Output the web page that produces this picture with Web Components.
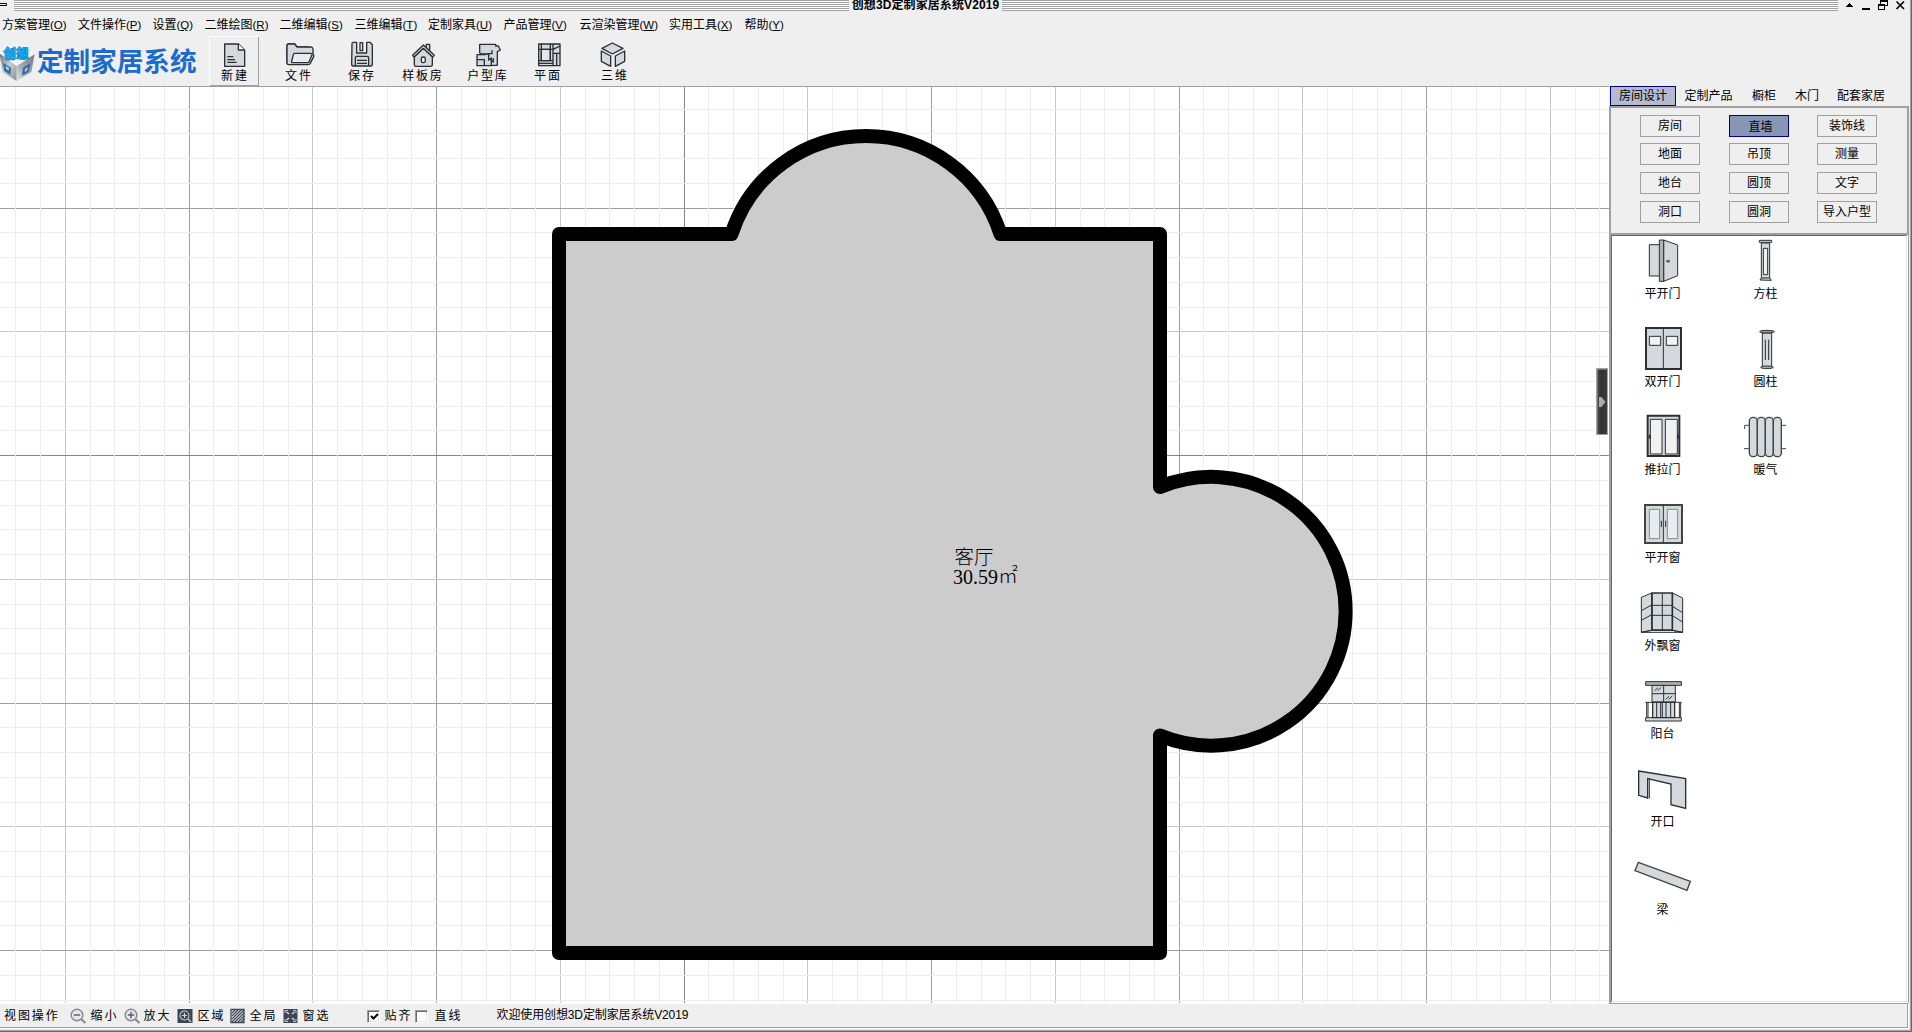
<!DOCTYPE html>
<html lang="zh-CN">
<head>
<meta charset="utf-8">
<title>创想3D定制家居系统V2019</title>
<style>
html,body{margin:0;height:100%;overflow:hidden;background:#efefef}
body{font:12px/16px "Liberation Sans","Noto Sans CJK SC",sans-serif;color:#000}
</style>
</head>
<body>
<design-app></design-app>
<script>
const define = (name, html, setup) => {
  const t = document.createElement('template');
  t.innerHTML = html;
  customElements.define(name, class extends HTMLElement {
    constructor() {
      super();
      this.attachShadow({mode: 'open'});
    }
    connectedCallback() {
      if (this.shadowRoot.childNodes.length) return;
      this.shadowRoot.append(t.content.cloneNode(true));
      if (setup) setup(this, this.shadowRoot);
    }
  });
};
const F = '#d3d9dd', K = '#2b2f33';
const toolIcons = {
  neu: ['627', `<path d="M674 132h41l19 18v49h-60z"/><path d="M715 132v18h19" fill="#fff"/><path d="M682 170h18M682 179h23M682 187h28" fill="none"/>`],
  open: ['819', `<path d="M866 194q-5-1-5-6v-50q0-6 5-6h18l7 9h33q5 0 6 6v8"/><path d="M866 194q-5-1-5-6v-50q0-6 5-6h18l7 9h42q5 0 6 6v16q4 2 2 7l-9 18q-2 6-9 6z"/><path d="M883 160h48q6 0 5 4l-8 20q-2 4-6 4h-43q-6 0-4-5l5-19q1-4 3-4z" fill="#e9ecee"/>`],
  save: ['1008', `<path d="M1056 131q0-4 4-4h10v32h30v-32h10l7 7v58q0 6-5 6h-52q-5 0-5-6z"/><path d="M1080 128h8v24h-8z" fill="#e7e7e7"/><path d="M1066 198v-25q0-4 4-4h32q4 0 4 4v25M1071 181h30M1071 190h30" fill="none"/>`],
  house: ['-9', `<path d="M43 170v24q0 5 5 5h44q5 0 5-5v-24l-27-26z"/><path d="M79 146v-13h10v24"/><path d="M38 166l32-31 33 31-5 5-28-26-28 26z"/><rect x="64" y="171" width="12" height="17" rx="5" fill="#efefef"/>`],
  unit: ['186', `<path d="M231 164h24v-3h20v36h-44z"/><path d="M239 133h48v5h8l6 12-9 5v41h-18v-22l-8 6v-18h-20l-7-3z"/><path d="M231 179h22v18M270 178l10 8v-12M262 161h14v-10" fill="none"/>`],
  plan: ['366', `<path d="M416 132h64v65h-64z"/><path d="M424 148h27v34h-27z" fill="#e3e7ea"/><path d="M424 132v50M416 148h43M459 132v65M416 190h43M451 132v50M459 160h21M459 148l21-10M416 182h43M470 160v37" fill="none"/>`],
  cube: ['567', `<path d="M606 145l31-16 32 16-32 17z"/><path d="M604 153l28 15v31l-28-15z"/><path d="M674 153l-28 15v31l28-15z"/>`]
};
const itemIcons = {
  door: ['120 39', `<path d="M178 59h34v94h-34z"/><path d="M221 45l42 15v92l-42 17z"/><path d="M208 45h13v124h-13z" fill="#aeb5ba"/><path d="M229 109h10" stroke-width="4"/><circle cx="235" cy="109" r="3"/>`],
  pillar: ['429 39', `<path d="M514 54h25v106h-25z"/><path d="M520 70h13v79h-13z" fill="#f1f1f1"/><path d="M508 46h37v6h-37zM510 165q2-7 8-6h18q6 0 8 7z"/>`],
  doubledoor: ['120 303', `<path d="M168 309h105v123h-105z" stroke-width="6"/><path d="M220 309v123"/><path d="M178 334h34v27h-34zM229 334h34v27h-34z" fill="#f1f1f1"/>`],
  column: ['429 303', `<path d="M517 324h28v102h-28z"/><path d="M526 344v61M536 344v61" fill="none"/><ellipse cx="531" cy="320" rx="22" ry="4" fill="#999"/><ellipse cx="531" cy="427" rx="19" ry="4" fill="#aaa"/>`],
  slide: ['120 567', `<path d="M173 572h95v121h-95z" stroke-width="6"/><path d="M181 583h35v104h-35zM226 583h36v104h-36z" fill="#f1f1f1"/><path d="M179 629v12M264 629v12" stroke-width="5"/>`],
  heater: ['429 567', `<path d="M464 612v-11h14M462 671h16M574 601h14M574 671h14" fill="none" stroke="#444"/><g stroke="#444" stroke-width="4"><rect x="478" y="577" width="24" height="118" rx="11"/><rect x="502" y="577" width="24" height="118" rx="11"/><rect x="526" y="577" width="24" height="118" rx="11"/><rect x="550" y="577" width="24" height="118" rx="11"/></g>`],
  window: ['120 831', `<path d="M165 840h111v114h-111z" stroke-width="6" stroke="#444"/><path d="M220 840v114"/><path d="M178 853h31v88h-31zM232 853h31v88h-31z" fill="#e6edf0" stroke="#888"/><path d="M214 887v19M227 887v19"/>`],
  bay: ['120 60', `<path d="M154 82l31-13v112l-31 6zM278 84l-31-15v112l31 6z"/><path d="M186 69h61v111h-61z" stroke-width="5"/><path d="M217 69v111M186 106h61M186 136h61M154 122l31-17M154 151l31-17M247 109l31 19M247 137l31 19M154 187l31-6h62l31 6z" fill="none"/>`],
  balcony: ['120 324', `<path d="M186 346h70v50h-70z"/><path d="M221 346v50M186 371h70M194 362l10-9M203 362l11-10M227 388l10-9M236 388l11-10" fill="none"/><path d="M167 335h107v11h-107z" fill="#aab0b5"/><path d="M188 397h66v46h-66zM167 443h107v10h-107z"/><path d="M166 397h109M170 397v46M174 397v46M188 397v46M200 397v46M212 397v46M217 397v46M228 397v46M242 397v46M254 397v46M268 397v46M272 397v46" fill="none"/>`],
  opening: ['120 588', `<path d="M146 603l141 23v89l-44-11v-62l-70-16v58l-27-8z" stroke-width="4"/><path d="M178 627v58" fill="none"/>`],
  beam: ['120 852', `<path d="M145 877l156 57-10 27-156-59z" stroke-width="4" stroke="#444"/>`]
};
const small = {
  minus: `<circle cx="7" cy="7" r="5.8" fill="#e4e8ec" stroke="#858a92" stroke-width="1.4"/><path d="M3.8 7h6.4" stroke="#555b65" stroke-width="1.4"/><path d="M11 11l4.5 4" stroke="#858a92" stroke-width="2.2"/>`,
  plus: `<circle cx="7" cy="7" r="5.8" fill="#e4e8ec" stroke="#858a92" stroke-width="1.4"/><path d="M3.8 7h6.4M7 3.8v6.4" stroke="#555b65" stroke-width="1.4"/><path d="M11 11l4.5 4" stroke="#858a92" stroke-width="2.2"/>`,
  area: `<path d="M.5 1h15v14h-15z" fill="#3d4653"/><circle cx="7.5" cy="7.5" r="4.5" fill="none" stroke="#c5cad0" stroke-width="1.1"/><path d="M5 7.5h5M7.5 5v5M11 11l3 3" stroke="#d5d9dd" stroke-width="1.1"/>`,
  all: `<path d="M1 1.500h13v13h-13z" fill="#f4f4f4" stroke="#3d4653" stroke-width="1.3"/><path d="M2 5l3-3M2 8l6-6M2 11l9-9M2 14l12-12M5 14l9-9M8 14l6-6M11 14l3-3" stroke="#3d4653" stroke-width="1.3"/>`,
  pick: `<path d="M.5 1h14v14h-14z" fill="#3d4653"/><path d="M2 5V2.500h3M10 2.500h3V5M13 11v2.500h-3M5 13.500H2V11" fill="none" stroke="#b9c0c7"/><path d="M3.500 4l2.500 2M11.500 4L9 6M3.500 12l2.500-2M11.500 12L9 10" stroke="#dfe3e6" stroke-width="1.300"/>`
};

define('title-bar', `<style>
:host{display:flex;height:16px;box-sizing:border-box}
.rail{flex:none;height:11px;background:repeating-linear-gradient(#a0a0a0 0 1px,#fff 1px 2px)}
b{flex:none;width:153px;height:11px;line-height:10px;letter-spacing:.1px;overflow:hidden;display:flex;justify-content:center;white-space:nowrap}
svg{display:block;flex:none}
</style>
<svg width="14" height="11"><path d="M0 3.500h6.500v2H0" fill="none" stroke="#000"/></svg>
<div class="rail" style="width:835px"></div><b><slot></slot></b><div class="rail" style="width:836px"></div>
<svg width="70" height="14" shape-rendering="crispEdges" fill="none" stroke="#000" stroke-width="1"><path d="M7 7l4-4 4 4z" fill="#000" stroke="none"/><path d="M24 9h8" stroke-width="2"/><path d="M43 1h7" stroke-width="2"/><path d="M42.500 0v4M49.500 0v5.500H46"/><path d="M40.500 5v4.500h6V5z"/><path d="M40 5h7" stroke-width="2"/><path d="M58.500 1.500l7.500 7.500M66 1.500l-7.500 7.500" stroke-width="1.600" shape-rendering="auto"/></svg>`);

define('menu-bar', `<style>
:host{display:flex;height:20px;padding-left:2px}
span{white-space:nowrap;line-height:19px;flex:none}
i{font-style:normal;font-size:11.500px}
</style>`, (h, r) => {
  [['方案管理','O',76],['文件操作','P',74.500],['设置','Q',52],['二维绘图','R',75],['二维编辑','S',75],['三维编辑','T',73.500],['定制家具','U',75.500],['产品管理','V',76],['云渲染管理','W',89.500],['实用工具','X',75.500],['帮助','Y',60]]
  .forEach(([t,k,w]) => {
    const s = document.createElement('span');
    s.style.width = w + 'px';
    s.innerHTML = `${t}<i>(<u>${k}</u>)</i>`;
    r.append(s);
  });
});

define('app-logo', `<style>
:host{display:flex;width:209px;height:50px;align-items:center}
b{font:bold 26.600px/30px "Noto Sans CJK SC",sans-serif;color:#1a6bcb;margin:-2px 0 0 1px;white-space:nowrap}
svg{display:block;flex:none}
</style>
<svg width="36" height="50" viewBox="0 108 108 150">
<defs><linearGradient id="l" x1="0" y1="0" x2="1" y2="1"><stop offset="0" stop-color="#6f7377"/><stop offset=".5" stop-color="#c9ccce"/><stop offset="1" stop-color="#8b8f93"/></linearGradient><linearGradient id="r" x1="1" y1="0" x2="0" y2="1"><stop offset="0" stop-color="#75797d"/><stop offset=".6" stop-color="#a5a9ad"/><stop offset="1" stop-color="#e3e5e7"/></linearGradient></defs>
<path d="M0 158l50-34 54 37-54 36z" fill="#f3f3f3"/><path d="M-2 160l52 37v46L9 218z" fill="url(#l)"/><path d="M104 161l-54 36v46l44-27z" fill="url(#r)"/>
<path d="M9 188l24 15-2 22-18-12z" fill="#2a6db0"/><path d="M17 197l10 6-1 9-8-5z" fill="#b9c9d8"/><path d="M92 189l-23 14-3 24 20-12z" fill="#2a6db0"/><path d="M84 201l-9 6-1 9 7-4z" fill="#b9c9d8"/>
<path d="M0 158l50 39 54-36" fill="none" stroke="#fff" stroke-width="2"/>
<text x="10" y="175" font-family="Noto Sans CJK SC" font-weight="900" font-size="38" fill="#12b8f3" stroke="#0d8fd8" stroke-width="2.500">创想</text></svg>
<b>定制家居系统</b>`);

define('tool-button', `<style>
:host{display:flex;flex-direction:column;align-items:center;width:50px;height:50px;box-sizing:border-box;flex:none}
:host([active]){background:linear-gradient(#fff,#fff) 0 0/100% 1px no-repeat,linear-gradient(#fff,#fff) 0 0/1px 100% no-repeat,linear-gradient(#a0a0a0,#a0a0a0) 100% 0/1px 100% no-repeat,linear-gradient(#a0a0a0,#a0a0a0) 0 100%/100% 1px no-repeat}
svg{display:block;margin-top:4px;flex:none}
span{line-height:17px;letter-spacing:1.800px;margin-right:-1.800px;white-space:nowrap}
</style><svg width="50" height="28"></svg><span><slot></slot></span>`, (h, r) => {
  const [x, p] = toolIcons[h.getAttribute('icon')], s = r.querySelector('svg');
  s.setAttribute('viewBox', `${x} 120 150 84`);
  s.innerHTML = `<g fill="${F}" stroke="${K}" stroke-width="4" stroke-linejoin="round">${p}</g>`;
});

define('tool-bar', `<style>:host{display:flex;height:50px;border-bottom:1px solid #a0a0a0;width:1609px}</style>
<app-logo></app-logo>
<tool-button icon="neu" active>新建</tool-button>
<tool-button icon="open" style="margin-left:14px">文件</tool-button>
<tool-button icon="save" style="margin-left:13px">保存</tool-button>
<tool-button icon="house" style="margin-left:11px">样板房</tool-button>
<tool-button icon="unit" style="margin-left:15px">户型库</tool-button>
<tool-button icon="plan" style="margin-left:10px">平面</tool-button>
<tool-button icon="cube" style="margin-left:17px">三维</tool-button>`);

define('plan-canvas', `<style>
:host{display:block;position:relative;width:1609px;height:917px;background:#fff;overflow:hidden}
svg{display:block}
.handle{position:absolute;left:1596px;top:281px}
</style>
<svg width="1609" height="917" viewBox="0 87 1609 917"><g id="grid" shape-rendering="crispEdges"></g>
<path d="M559 234H731.500A141.300 141.300 0 0 1 1000.500 234H1160V487A134.400 134.400 0 1 1 1160 735.500V953H559Z" fill="#ccc" stroke="#000" stroke-width="14" stroke-linejoin="round"/>
<text x="954.500" y="564" font-family="Noto Sans CJK SC" font-weight="300" font-size="19.500">客厅</text>
<text x="953" y="583.500" font-family="Liberation Serif" font-size="20">30.59</text><text x="998" y="583" font-family="Noto Sans CJK SC" font-weight="300" font-size="20">㎡</text></svg>
<svg class="handle" width="12" height="67"><defs><linearGradient id="h"><stop offset="0" stop-color="#4a4a4a"/><stop offset=".4" stop-color="#303030"/><stop offset="1" stop-color="#3c3c3c"/></linearGradient></defs><path d="M0 0h12v67H0z" fill="#a0a0a0"/><path d="M1.500 1.500h9.500V66H1.500z" fill="url(#h)"/><path d="M3 29h2.500l4 5-4 5H3z" fill="#aaa"/></svg>`,
(h, r) => {
  const g = r.getElementById('grid'), minor = [], major = [];
  const color = k => k === 0 ? '#858585' : k % 10 === 0 ? '#a0a0a0' : '#c8c8c8';
  for (let k = -27; k <= 37; k++) {
    const x = Math.floor(684 + 24.75 * k);
    (k % 5 ? minor : major).push(`<path d="M${x} 87h1v916h-1z" fill="${k % 5 ? '#ededed' : color(k)}"/>`);
  }
  for (let k = -14; k <= 22; k++) {
    const y = Math.floor(455.5 + 24.75 * k);
    (k % 5 ? minor : major).push(`<path d="M0 ${y}h1609v1H0z" fill="${k % 5 ? '#ededed' : color(k)}"/>`);
  }
  g.innerHTML = major.join('') + minor.join('');
});

define('panel-tabs', `<style>
:host{display:flex;height:20px;margin-left:1px}
span{box-sizing:border-box;height:20px;line-height:21px;text-align:center;white-space:nowrap}
.on{width:66px;border:1px solid #000080;background:#b5bad1;line-height:19px}
</style><span class="on">房间设计</span><span style="width:65px">定制产品</span><span style="width:46px">橱柜</span><span style="width:40px">木门</span><span style="width:68px">配套家居</span>`);

define('wall-button', `<style>
:host{display:block;box-sizing:border-box;width:60px;height:22px;border:1px solid #a0a0a0;line-height:20px;text-align:center;white-space:nowrap}
:host([active]){border-color:#000080;background:#8795b7;padding:1px 0 0 3px}
</style><slot></slot>`);

define('build-tools', `<style>
:host{display:grid;box-sizing:border-box;width:300px;height:129px;border:2px solid #a0a0a0;padding:7px 0 0 29px;grid-template-columns:89px 88px 60px;grid-template-rows:28px 29px 29px 22px}
</style>`, (h, r) => {
  '房间 直墙 装饰线 地面 吊顶 测量 地台 圆顶 文字 洞口 圆洞 导入户型'.split(' ').forEach((t, i) => {
    const b = document.createElement('wall-button');
    b.textContent = t;
    if (i === 1) b.setAttribute('active', '');
    r.append(b);
  });
});

define('part-item', `<style>
:host{display:flex;flex-direction:column;align-items:center;width:65px;height:88px}
svg{display:block}span{line-height:16px;white-space:nowrap}
</style><svg width="65" height="48"></svg><span><slot></slot></span>`, (h, r) => {
  const [v, p] = itemIcons[h.getAttribute('icon')], s = r.querySelector('svg');
  s.setAttribute('viewBox', `${v} 195 144`);
  s.innerHTML = `<g fill="${F}" stroke="${K}" stroke-width="3">${p}</g>`;
});

define('part-list', `<style>
:host{display:flex;box-sizing:border-box;width:299px;height:769px;background:#fff;border:1px solid #a0a0a0;border-top:0;border-left:0}
.in{display:flex;flex:1;margin:0 1px 1px 0;border:1px solid #e3e3e3;border-left-color:#696969;border-top-color:#696969;padding:2px 0 0 18px;gap:38px}
.c{display:flex;flex-direction:column}
</style><div class="in"><div class="c">
<part-item icon="door">平开门</part-item><part-item icon="doubledoor">双开门</part-item><part-item icon="slide">推拉门</part-item><part-item icon="window">平开窗</part-item><part-item icon="bay">外飘窗</part-item><part-item icon="balcony">阳台</part-item><part-item icon="opening">开口</part-item><part-item icon="beam">梁</part-item>
</div><div class="c"><part-item icon="pillar">方柱</part-item><part-item icon="column">圆柱</part-item><part-item icon="heater">暖气</part-item></div></div>`);

define('side-panel', `<style>:host{display:block;width:300px}.wrap{box-sizing:border-box;border-left:2px solid #a0a0a0;width:300px}part-list{width:298px}</style>
<panel-tabs></panel-tabs><build-tools></build-tools><div class="wrap"><part-list style="width:298px"></part-list></div>`);

define('status-bar', `<style>
:host{display:flex;box-sizing:border-box;width:1908px;height:25px;border:solid #a0a0a0;border-width:1px 1px 1px 0;align-items:center;padding-left:4px;background:#efefef}
span{white-space:nowrap;letter-spacing:1.900px;line-height:20px;flex:none}
svg{display:block;flex:none;margin-top:1px}
.msg{letter-spacing:-.12px;margin-top:-2px}
.cb{flex:none;box-sizing:border-box;width:13px;height:13px;border:1px solid;border-color:#a0a0a0 #fff #fff #a0a0a0;background:#fff;box-shadow:inset 1px 1px #696969,inset -1px -1px #e3e3e3;margin-top:1px}
.cb svg{margin:1px}
</style>`, (h, r) => {
  const text = (t, w) => `<span style="width:${w}px">${t}</span>`;
  const icon = (n, w) => `<svg width="${w}" height="16" fill="none">${small[n]}</svg>`;
  r.innerHTML += text('视图操作', 66) + icon('minus', 20.500) + text('缩小', 33) + icon('plus', 20) + text('放大', 33) + icon('area', 21) + text('区域', 32) + icon('all', 20) + text('全局', 33) + icon('pick', 20) + text('窗选', 65)
    + '<div class="cb" style="margin-right:5px;margin-left:-1px"><svg width="10" height="10"><path d="M2 4l2.500 2.500L9 2" fill="none" stroke="#000" stroke-width="2"/></svg></div>' + text('贴齐', 30) + '<div class="cb" style="margin-right:7px"></div>' + text('直线', 62)
    + '<span class="msg">欢迎使用创想3D定制家居系统V2019</span>';
});

define('design-app', `<style>
:host{display:flex;flex-direction:column;box-sizing:border-box;width:1912px;height:1032px;background:#efefef;overflow:hidden;border-right:1px solid #696969;border-bottom:1px solid #696969}
.frame{display:flex;flex-direction:column;flex:1;border-right:1px solid #a0a0a0;border-bottom:1px solid #a0a0a0}
.body{display:flex}
.foot{background:#fff;width:1909px;height:26px;margin-top:-1px}
</style><div class="frame"><title-bar>创想3D定制家居系统V2019</title-bar><menu-bar></menu-bar>
<div class="body"><div><tool-bar></tool-bar><plan-canvas></plan-canvas></div><side-panel style="margin-top:50px"></side-panel></div>
<div class="foot"><status-bar></status-bar></div></div>`);
</script>
</body>
</html>
